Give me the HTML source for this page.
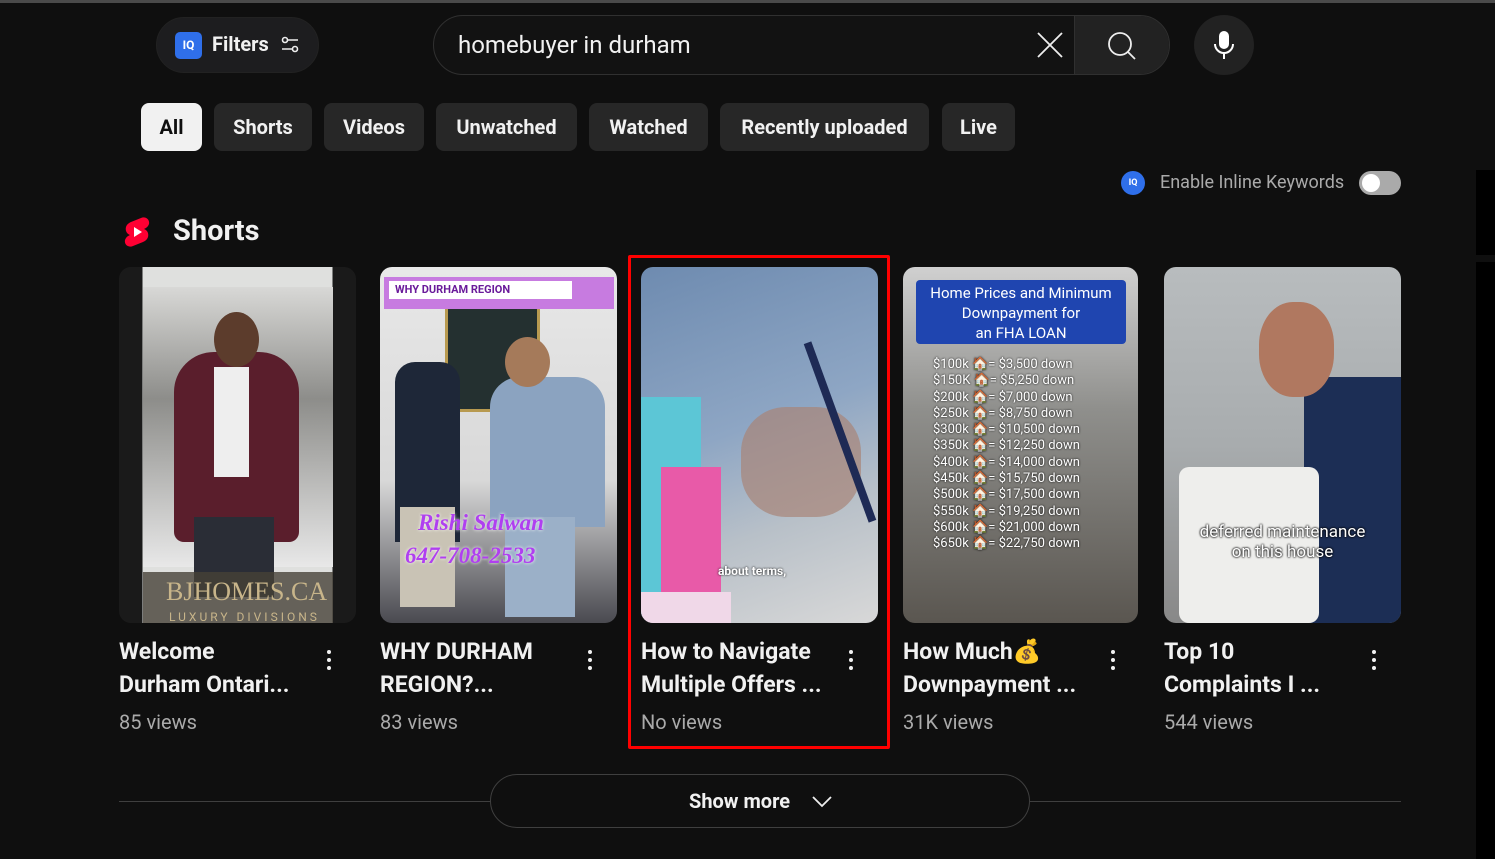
<!DOCTYPE html>
<html><head><meta charset="utf-8"><style>
*{margin:0;padding:0;box-sizing:border-box}
body{width:1495px;height:859px;background:#0f0f0f;font-family:"Roboto","Liberation Sans",sans-serif;color:#f1f1f1;position:relative;overflow:hidden}
.a{position:absolute}
.chip{position:absolute;top:103px;height:48px;border-radius:8px;background:#272727;font-size:20px;font-weight:bold;line-height:48px;text-align:center;color:#f1f1f1}
.th{position:absolute;top:267px;width:237px;height:356px;border-radius:12px;overflow:hidden}
.t{position:absolute;font-size:23px;font-weight:bold;line-height:33px;color:#f1f1f1}
.v{position:absolute;top:710px;font-size:20px;color:#aaa}
.dots{position:absolute;top:650px;width:4px}
.dots i{display:block;width:4px;height:4px;border-radius:2px;background:#f1f1f1;margin-bottom:4px}
</style></head><body>
<div class="a" style="left:0;top:0;width:1495px;height:3px;background:#4a4a4a"></div>
<div class="a" style="left:1476px;top:170px;width:19px;height:85px;background:#000"></div>
<div class="a" style="left:1476px;top:262px;width:19px;height:597px;background:#000"></div>

<div class="a" style="left:156px;top:17px;width:163px;height:56px;border-radius:28px;background:#1d1d1f;border:1px solid #222"></div>
<div class="a" style="left:175px;top:32px;width:27px;height:27px;border-radius:5px;background:#2f6fea;font-size:12px;font-weight:bold;line-height:27px;text-align:center;color:#fff">IQ</div>
<div class="a" style="left:212px;top:32px;font-size:20px;font-weight:bold;color:#f1f1f1">Filters</div>
<svg class="a" style="left:280px;top:35px" width="20" height="20" viewBox="0 0 20 20" fill="none" stroke="#eee" stroke-width="1.6"><circle cx="5" cy="5" r="2.5"/><path d="M8 5h10M2 14h10"/><circle cx="15" cy="14" r="2.5"/></svg>

<div class="a" style="left:433px;top:15px;width:737px;height:60px;border-radius:30px;border:1px solid #303030;background:#121212;overflow:hidden">
<div class="a" style="left:640px;top:0;width:97px;height:60px;background:#222;border-left:1px solid #303030"></div></div>
<div class="a" style="left:458px;top:31px;font-size:24px;color:#f1f1f1">homebuyer in durham</div>
<svg class="a" style="left:1036px;top:31px" width="28" height="28" viewBox="0 0 28 28" stroke="#eee" stroke-width="1.8"><path d="M2 2L26 26M26 2L2 26"/></svg>
<svg class="a" style="left:1107px;top:31px" width="30" height="30" viewBox="0 0 30 30" fill="none" stroke="#eee" stroke-width="1.8"><circle cx="13" cy="13" r="11"/><path d="M21 21l7 7"/></svg>
<div class="a" style="left:1194px;top:15px;width:60px;height:60px;border-radius:30px;background:#222"></div>
<svg class="a" style="left:1212px;top:30px" width="24" height="30" viewBox="0 0 24 30"><rect x="7" y="1" width="10" height="18" rx="5" fill="#fff"/><path d="M3 14a9 9 0 0 0 18 0M12 23v6" stroke="#fff" stroke-width="2" fill="none"/></svg>

<div class="chip" style="left:141px;width:61px;background:#f1f1f1;color:#0f0f0f">All</div>
<div class="chip" style="left:214px;width:98px">Shorts</div>
<div class="chip" style="left:324px;width:100px">Videos</div>
<div class="chip" style="left:436px;width:141px">Unwatched</div>
<div class="chip" style="left:589px;width:119px">Watched</div>
<div class="chip" style="left:720px;width:209px">Recently uploaded</div>
<div class="chip" style="left:942px;width:73px">Live</div>

<div class="a" style="left:1121px;top:171px;width:24px;height:24px;border-radius:12px;background:#2f6fea;font-size:9px;font-weight:bold;color:#fff;line-height:24px;text-align:center">IQ</div>
<div class="a" style="left:1160px;top:172px;font-size:18px;color:#aaa">Enable Inline Keywords</div>
<div class="a" style="left:1359px;top:171px;width:42px;height:24px;border-radius:12px;background:#aaa"></div>
<div class="a" style="left:1362px;top:174px;width:18px;height:18px;border-radius:9px;background:#fff"></div>

<svg class="a" style="left:123px;top:216px" width="28" height="32" viewBox="0 0 28 32"><path d="M18 2c4-2 9 1 8 6-1 3-3 4-5 5 3 1 5 4 4 8-1 3-3 4-5 5L10 30c-4 2-9-1-8-6 1-3 3-4 5-5-3-1-5-4-4-8 1-3 3-4 5-5z" fill="#f03"/><path d="M11 11l8 5-8 5z" fill="#fff"/></svg>
<div class="a" style="left:173px;top:214px;font-size:29px;font-weight:bold">Shorts</div>

<div class="th" style="left:119px;background:linear-gradient(90deg,#1a1a1a 0 10%,#dfe0de 10% 90%,#1a1a1a 90%)">
<div class="a" style="left:24px;top:20px;width:190px;height:280px;background:linear-gradient(180deg,#d8d8d6,#8d8d8a 40%,#e8e8e8)"></div>
<div class="a" style="left:55px;top:85px;width:125px;height:190px;background:#5a1e2c;border-radius:40px 40px 10px 10px"></div>
<div class="a" style="left:95px;top:45px;width:45px;height:55px;background:#5c3c2c;border-radius:50%"></div>
<div class="a" style="left:95px;top:100px;width:35px;height:110px;background:#eee"></div>
<div class="a" style="left:75px;top:250px;width:80px;height:80px;background:#2a2d36"></div>
<div class="a" style="left:24px;top:305px;width:190px;height:51px;background:rgba(70,65,55,.8)"></div>
<div class="a" style="left:47px;top:310px;font-family:'Liberation Serif',serif;font-size:26px;color:#c8b58a">BJHOMES.CA</div>
<div class="a" style="left:50px;top:343px;font-size:12px;letter-spacing:3px;color:#c8b58a">LUXURY DIVISIONS</div>
</div>
<div class="th" style="left:380px;background:linear-gradient(180deg,#e8e8e8,#d8d8d8 60%,#4a4a50)">
<div class="a" style="left:65px;top:30px;width:95px;height:115px;background:#243030;border:3px solid #b89a50"></div>
<div class="a" style="left:4px;top:10px;width:230px;height:32px;background:#c77be0"></div>
<div class="a" style="left:9px;top:14px;width:183px;height:18px;background:#fff;font-size:11px;font-weight:bold;color:#6a1b9a;padding-left:6px;line-height:18px">WHY DURHAM REGION</div>
<div class="a" style="left:15px;top:95px;width:65px;height:180px;background:#1e2738;border-radius:20px 20px 0 0"></div>
<div class="a" style="left:20px;top:240px;width:55px;height:100px;background:#c9c3b5"></div>
<div class="a" style="left:110px;top:110px;width:115px;height:150px;background:#8ba3c0;border-radius:30px 30px 0 0"></div>
<div class="a" style="left:125px;top:250px;width:70px;height:100px;background:#9bb0c8"></div>
<div class="a" style="left:125px;top:70px;width:45px;height:50px;background:#a57a5a;border-radius:50%"></div>
<div class="a" style="left:38px;top:243px;font-family:'Liberation Serif',serif;font-style:italic;font-weight:bold;font-size:23px;color:#b03ff0;text-shadow:0 0 3px #fff">Rishi Salwan</div>
<div class="a" style="left:25px;top:276px;font-family:'Liberation Serif',serif;font-style:italic;font-weight:bold;font-size:23px;color:#b03ff0;text-shadow:0 0 3px #fff">647-708-2533</div>
</div>
<div class="th" style="left:641px;background:linear-gradient(160deg,#6e8bb0,#8ea6c4 45%,#b8c0c8 70%,#d8d8d8)">
<div class="a" style="left:100px;top:140px;width:120px;height:110px;background:#a88478;border-radius:45px;opacity:.7"></div>
<div class="a" style="left:195px;top:70px;width:8px;height:190px;background:#1e2a55;transform:rotate(-20deg)"></div>
<div class="a" style="left:0;top:130px;width:60px;height:220px;background:#5cc6d6"></div>
<div class="a" style="left:20px;top:200px;width:60px;height:150px;background:#e85aa8"></div>
<div class="a" style="left:0;top:325px;width:90px;height:31px;background:#f0d8e8"></div>
<div class="a" style="left:77px;top:297px;font-size:12px;font-weight:bold;color:#fff;text-shadow:0 0 2px #000">about terms,</div>
</div>
<div class="th" style="left:903px;width:235px;background:linear-gradient(180deg,#d0d0d0,#8f8f8c 40%,#5a5650)">
<div class="a" style="left:13px;top:13px;width:210px;height:64px;background:#1f45b0;border-radius:4px;font-size:15px;line-height:20px;text-align:center;color:#fff;padding-top:3px">Home Prices and Minimum<br>Downpayment for<br>an FHA LOAN</div>
<div class="a" style="left:30px;top:90px;font-size:13px;line-height:16.3px;color:#fff;text-shadow:0 0 2px #000">$100k 🏠= $3,500 down<br>$150K 🏠= $5,250 down<br>$200k 🏠= $7,000 down<br>$250k 🏠= $8,750 down<br>$300k 🏠= $10,500 down<br>$350k 🏠= $12,250 down<br>$400k 🏠= $14,000 down<br>$450k 🏠= $15,750 down<br>$500k 🏠= $17,500 down<br>$550k 🏠= $19,250 down<br>$600k 🏠= $21,000 down<br>$650k 🏠= $22,750 down</div>
</div>
<div class="th" style="left:1164px;background:linear-gradient(180deg,#b8bcbe,#a8acae 50%,#888)">
<div class="a" style="left:140px;top:110px;width:97px;height:250px;background:#1c2e55"></div>
<div class="a" style="left:95px;top:35px;width:75px;height:95px;background:#b07860;border-radius:45%"></div>
<div class="a" style="left:15px;top:200px;width:140px;height:156px;background:#eeeeec;border-radius:10px"></div>
<div class="a" style="left:0;top:255px;width:237px;text-align:center;font-size:17px;line-height:20px;color:#fff;text-shadow:0 0 2px #000,0 0 2px #000">deferred maintenance<br>on this house</div>
</div>

<div class="t" style="left:119px;top:635px">Welcome<br>Durham Ontari...</div>
<div class="t" style="left:380px;top:635px">WHY DURHAM<br>REGION?...</div>
<div class="t" style="left:641px;top:635px">How to Navigate<br>Multiple Offers ...</div>
<div class="t" style="left:903px;top:635px">How Much💰<br>Downpayment ...</div>
<div class="t" style="left:1164px;top:635px">Top 10<br>Complaints I ...</div>
<div class="v" style="left:119px">85 views</div>
<div class="v" style="left:380px">83 views</div>
<div class="v" style="left:641px">No views</div>
<div class="v" style="left:903px">31K views</div>
<div class="v" style="left:1164px">544 views</div>
<div class="dots" style="left:327px"><i></i><i></i><i></i></div>
<div class="dots" style="left:588px"><i></i><i></i><i></i></div>
<div class="dots" style="left:849px"><i></i><i></i><i></i></div>
<div class="dots" style="left:1111px"><i></i><i></i><i></i></div>
<div class="dots" style="left:1372px"><i></i><i></i><i></i></div>

<div class="a" style="left:628px;top:255px;width:262px;height:494px;border:3px solid #f00;border-radius:2px"></div>

<div class="a" style="left:119px;top:801px;width:1282px;height:1px;background:#3f3f3f"></div>
<div class="a" style="left:490px;top:774px;width:540px;height:54px;border-radius:27px;border:1px solid #3f3f3f;background:#0f0f0f"></div>
<div class="a" style="left:689px;top:789px;font-size:20px;font-weight:bold">Show more</div>
<svg class="a" style="left:811px;top:794px" width="22" height="14" viewBox="0 0 22 14" fill="none" stroke="#eee" stroke-width="1.8"><path d="M2 3l9 9 9-9"/></svg>
</body></html>
